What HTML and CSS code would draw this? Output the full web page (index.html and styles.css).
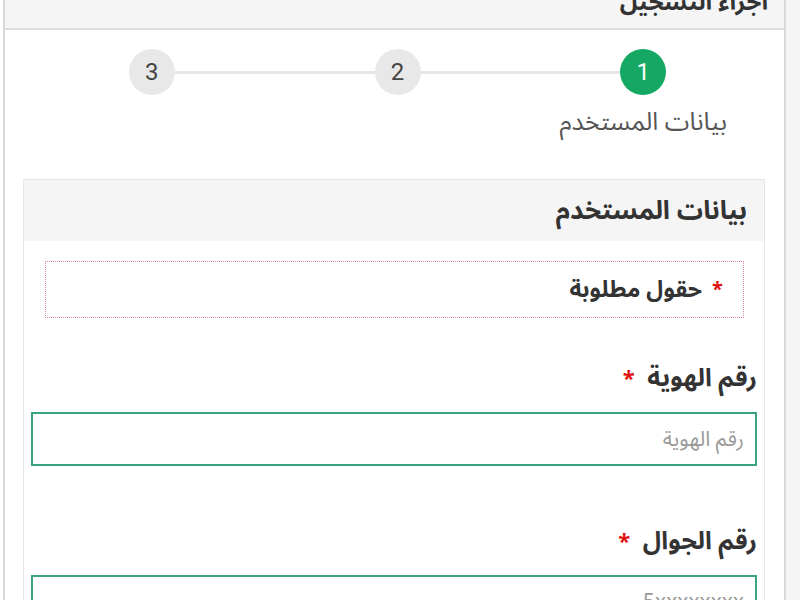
FILE: index.html
```html
<!DOCTYPE html>
<html lang="ar" dir="rtl">
<head>
<meta charset="utf-8">
<title>اجراء التسجيل</title>
<link rel="stylesheet" href="styles.css">
</head>
<body>
<div class="page">
  <div class="side-strip"></div>
  <section class="panel">
    <header class="panel-head"><h2>اجراء التسجيل</h2></header>
    <div class="panel-body">
      <ol class="stepper">
        <li class="step active"><span class="circle">1</span><span class="step-label">بيانات المستخدم</span></li>
        <li class="step"><span class="circle">2</span></li>
        <li class="step"><span class="circle">3</span></li>
      </ol>
      <div class="card">
        <div class="card-head"><h3>بيانات المستخدم</h3></div>
        <div class="card-body">
          <div class="note"><span class="req">*</span> حقول مطلوبة</div>
          <div class="group">
            <label class="label">رقم الهوية <span class="req">*</span></label>
            <input class="field" type="text" placeholder="رقم الهوية">
          </div>
          <div class="group">
            <label class="label">رقم الجوال <span class="req">*</span></label>
            <input class="field" type="text" placeholder="5xxxxxxxx">
          </div>
        </div>
      </div>
    </div>
  </section>
</div>
</body>
</html>
```

FILE: styles.css
```css
html, body {
  margin: 0;
  padding: 0;
  background: #ffffff;
  height: 600px;
  overflow: hidden;
}
body {
  font-family: "Noto Sans Arabic", "DejaVu Sans", "Noto Sans", sans-serif;
  color: #333;
}
.page {
  display: flex;
  flex-direction: row;
  align-items: flex-start;
  height: 600px;
  overflow: hidden;
}
.side-strip {
  width: 14px;
  align-self: stretch;
  background: #f5f5f5;
}
.panel {
  width: 779px;
  margin-top: -19px;
  border-left: 2px solid #d9d9d9;
  border-right: 2px solid #d9d9d9;
}
.panel-head {
  background: #f5f5f5;
  border-bottom: 2px solid #dcdcdc;
  height: 49px;
  padding: 0 16px 0 0;
  box-sizing: border-box;
}
.panel-head h2 {
  margin: 0;
  font-size: 24px;
  line-height: 44px;
  font-weight: bold;
  color: #333;
}
.panel-body {
  padding: 19px 19px 0 18px;
}
.stepper {
  list-style: none;
  margin: 0 -1px 0 6px;
  padding: 0;
  display: grid;
  grid-template-columns: repeat(3, 1fr);
  height: 130px;
}
.step {
  position: relative;
  display: flex;
  flex-direction: column;
  align-items: center;
}
.step::before {
  content: "";
  position: absolute;
  top: 22px;
  height: 3px;
  background: #e6e6e6;
  left: 0;
  right: 0;
}
.step:first-child::before { left: 0; right: 50%; }
.step:last-child::before { left: 50%; right: 0; }
.circle {
  position: relative;
  width: 46px;
  height: 46px;
  border-radius: 50%;
  background: #e8e8e8;
  color: #444;
  font-family: Roboto, "Liberation Sans", sans-serif;
  font-size: 24px;
  display: flex;
  align-items: center;
  justify-content: center;
}
.step.active .circle {
  background: #14a862;
  color: #fff;
}
.step-label {
  margin-top: 8px;
  font-size: 25px;
  line-height: 38px;
  color: #555;
  white-space: nowrap;
}
.card {
  border: 1px solid #e6e6e6;
}
.card-head {
  background: #f5f5f5;
  height: 61px;
  padding-right: 17px;
  display: flex;
  align-items: center;
}
.card-head h3 {
  margin: 0;
  font-size: 26px;
  font-weight: bold;
  color: #333;
}
.card-body {
  padding: 20px 7px 0 7px;
}
.note {
  margin: 0 13px 0 14px;
  height: 57px;
  box-sizing: border-box;
  border: 1px dotted #e08a9a;
  display: flex;
  align-items: center;
  padding-right: 20px;
  font-size: 23px;
  font-weight: bold;
  color: #333;
}
.req {
  color: #e01010;
  font-weight: bold;
}
.note .req { margin-left: 10px; font-size: 20px; }
.group {
  display: flex;
  flex-direction: column;
  margin-top: 44px;
}
.group + .group {
  margin-top: 59px;
}
.label {
  font-size: 25px;
  font-weight: bold;
  color: #333;
  line-height: 32px;
  margin-bottom: 17px;
}
.label .req { margin-right: 6px; font-size: 22px; }
.field {
  height: 54px;
  box-sizing: border-box;
  border: 2px solid #3aa57c;
  padding: 0 11px;
  font-family: inherit;
  font-size: 21px;
  color: #333;
  text-align: right;
  direction: rtl;
  outline: none;
  background: #fff;
}
.field::placeholder {
  color: #9a9a9a;
}
```
